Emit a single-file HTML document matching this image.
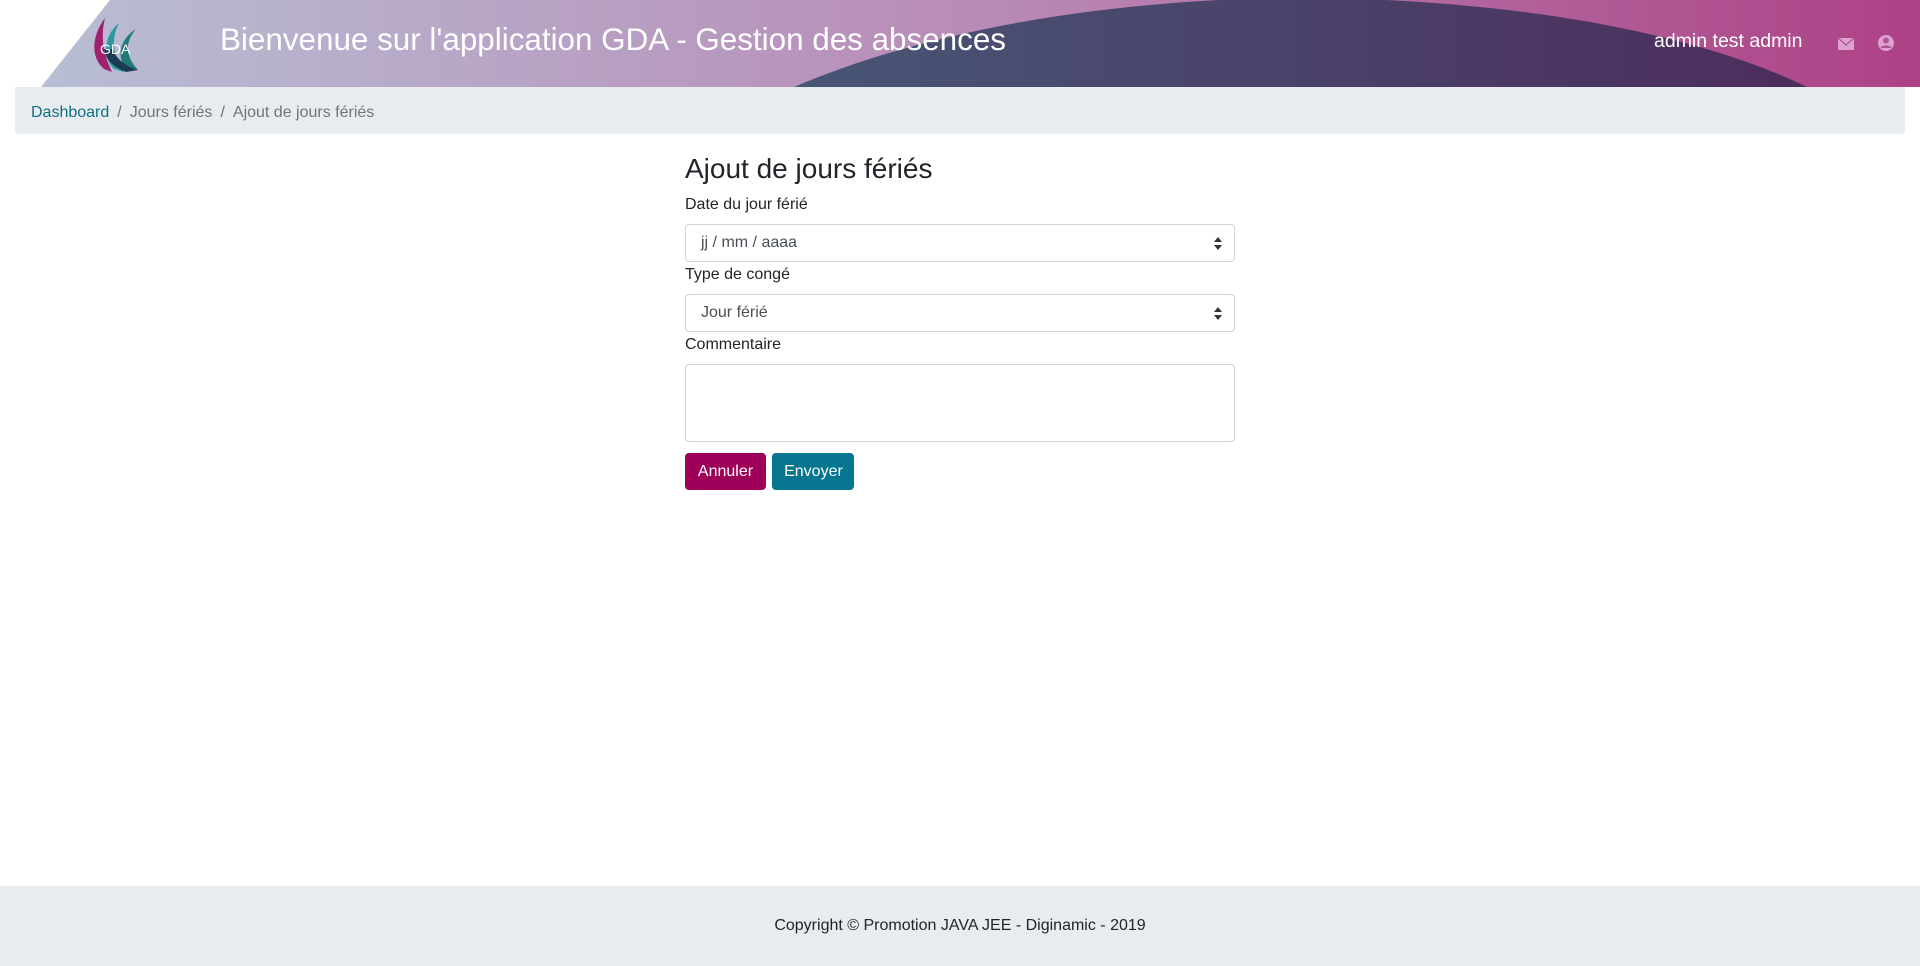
<!DOCTYPE html>
<html><head><meta charset="utf-8"><style>
*{box-sizing:border-box;margin:0;padding:0}
body{width:1920px;height:966px;background:#fff;font-family:"Liberation Sans",sans-serif;position:relative;overflow:hidden;color:#212529}
.hdr{position:absolute;left:0;top:0;width:1920px;height:87px}
.title{position:absolute;left:220px;top:22px;font-size:31.4px;color:#fff;white-space:nowrap;letter-spacing:0px}
.user{position:absolute;left:1654px;top:30px;font-size:19.5px;color:#fff}
.bc{position:absolute;left:15px;top:87px;width:1890px;height:47px;background:#e9ecef;border-radius:0 0 4px 4px;font-size:16px;padding:17px 16px 0;color:#6c757d}
.bc a{color:#0f6f86;text-decoration:none}
.bc span{margin:0 8px}
.form{position:absolute;left:685px;top:152px;width:550px}
h1{font-size:28px;font-weight:400;line-height:34px;margin-bottom:9px}
label{display:block;font-size:16px;line-height:20px;margin-bottom:9px}
.inp{height:38px;border:1px solid #ced4da;border-radius:4px;position:relative;font-size:16px;color:#495057;padding:9px 15px;margin-bottom:3px}
.arr{position:absolute;right:12px;top:12px;width:8px;height:13px}
.ta{height:78px;border:1px solid #ced4da;border-radius:4px;margin-bottom:11px}
.btn{display:inline-block;height:37px;border-radius:4px;color:#fff;font-size:16px;line-height:37px;text-align:center;vertical-align:top}
.ft{position:absolute;left:0;top:886px;width:1920px;height:80px;background:#e9ecef;text-align:center;font-size:16px;line-height:80px;color:#212529}
</style></head><body>
<svg class="hdr" width="1920" height="87" viewBox="0 0 1920 87">
<defs>
<linearGradient id="g1" x1="0" x2="1"><stop offset="0" stop-color="#b8bed4"/><stop offset="0.5" stop-color="#b88bb7"/><stop offset="1" stop-color="#ad4185"/></linearGradient>
<linearGradient id="g2" x1="0" x2="1"><stop offset="0" stop-color="#485675"/><stop offset="1" stop-color="#4c2d5c"/></linearGradient>
</defs>
<polygon points="110,0 1920,0 1920,87 41,87" fill="url(#g1)"/>
<path d="M794 87 C950 20 1150 -2 1300 -2 C1480 -2 1680 25 1807 87 Z" fill="url(#g2)"/>
<g transform="translate(80,5)">
<path d="M25 13 C12 30 10 52 24 64 L32 67 C24 50 20 34 25 13Z" fill="#a0216f"/>
<path d="M39 18 C24 30 22 52 34 64 L44 67 C34 52 30 36 39 18Z" fill="#2a9aa0"/>
<path d="M56 24 C40 34 36 52 46 63 L58 65 C46 52 44 38 56 24Z" fill="#1f7a78"/>
<path d="M24 44 C26 56 34 62 46 67 L58 65 C42 60 36 52 32 44Z" fill="#1d3a55"/>
<text x="20" y="49" font-family="Liberation Sans" font-size="14" fill="#fff">GDA</text>
</g>
<rect x="1838" y="38" width="16" height="12" fill="#dda3cf"/>
<path d="M1838 38 L1846 45 L1854 38" stroke="#b0559a" stroke-width="1.3" fill="none"/>
<circle cx="1886" cy="43" r="8" fill="#dda3cf"/>
<circle cx="1886" cy="40.5" r="3" fill="#b0559a"/>
<path d="M1880.5 48 C1882 44.5 1890 44.5 1891.5 48" fill="#b0559a"/>
</svg>
<div class="title">Bienvenue sur l'application GDA - Gestion des absences</div>
<div class="user">admin test admin</div>
<div class="bc"><a>Dashboard</a><span>/</span>Jours fériés<span>/</span>Ajout de jours fériés</div>
<div class="form">
<h1>Ajout de jours fériés</h1>
<label>Date du jour férié</label>
<div class="inp">jj / mm / aaaa<svg class="arr" viewBox="0 0 8 13"><path d="M0 5 L4 0 L8 5Z M0 8 L4 13 L8 8Z" fill="#333"/></svg></div>
<label>Type de congé</label>
<div class="inp">Jour férié<svg class="arr" viewBox="0 0 8 13"><path d="M0 5 L4 0 L8 5Z M0 8 L4 13 L8 8Z" fill="#333"/></svg></div>
<label>Commentaire</label>
<div class="ta"></div>
<span class="btn" style="width:81px;background:#9e0059">Annuler</span>
<span class="btn" style="width:82px;background:#057590;margin-left:2px">Envoyer</span>
</div>
<div class="ft">Copyright © Promotion JAVA JEE - Diginamic - 2019</div>
</body></html>
